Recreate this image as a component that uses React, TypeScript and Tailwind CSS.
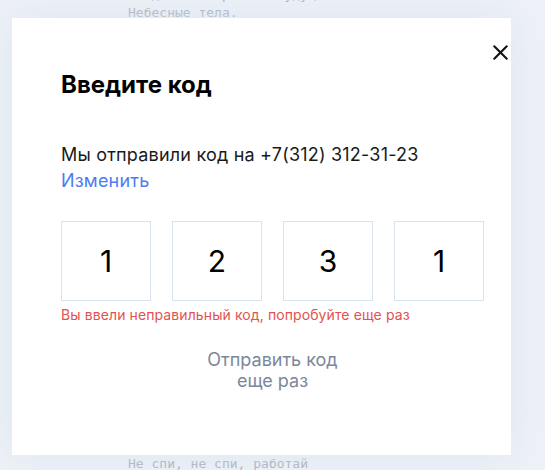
import { X } from "lucide-react";

const digits = ["1", "2", "3", "1"];

export default function App() {
    return (
        <div className="relative h-[470px] w-[545px] overflow-hidden bg-[#eef2f8]" style={{ fontFamily: "Inter, 'Noto Sans', sans-serif" }}>
            {/* фон страницы */}
            <div className="pl-[128px] font-['DejaVu_Sans_Mono',monospace] text-[13px] leading-[18px] text-[#a3a9b3]">
                <p className="-mt-[14px]">Когда-то в прошлом будущем.</p>
                <p>Небесные тела.</p>
                <p className="mt-[433px]">Не спи, не спи, работай</p>
            </div>

            {/* модалка */}
            <div className="absolute left-[12px] top-[18px] h-[437px] w-[499px] bg-white pl-[49px] pr-[27px] pt-[52px] shadow-[0_0_40px_rgba(220,228,240,0.9)]">
                <button className="absolute right-[3px] top-[26px] flex h-[16px] w-[16px] items-center justify-center text-[#111]">
                    <X size={25} strokeWidth={2} className="shrink-0" />
                </button>

                <h2 className="text-[24px] font-bold leading-[29px] text-black">Введите код</h2>

                <div className="mt-[43px] text-[18px] leading-[26px] tracking-[0.2px] text-[#1a1a1a]">
                    <p>Мы отправили код на +7(312) 312-31-23</p>
                    <button className="text-[#4d7cf2]">Изменить</button>
                </div>

                <div className="mt-[27px] flex gap-[21px]">
                    {digits.map((d, i) => (
                        <div key={i} className="flex h-[80px] w-[90px] items-center justify-center border border-[#d9e2ee] text-[30px] text-black">
                            {d}
                        </div>
                    ))}
                </div>

                <p className="mt-[5px] text-[14px] leading-[17px] tracking-[0.1px] text-[#e3524f]">Вы ввели неправильный код, попробуйте еще раз</p>

                <div className="mt-[26px] flex justify-center">
                    <button className="text-center text-[18px] leading-[21px] text-[#7b889c]">
                        Отправить код<br />еще раз
                    </button>
                </div>
            </div>
        </div>
    )
}
